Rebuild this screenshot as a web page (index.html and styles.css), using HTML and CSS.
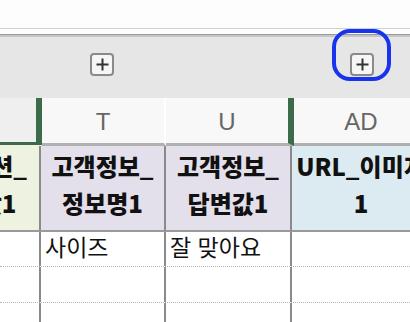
FILE: index.html
```html
<!DOCTYPE html>
<html lang="ko">
<head>
    <meta charset="UTF-8">
    <meta name="viewport" content="width=device-width, initial-scale=1.0">
    <title>Sheet</title>
    <link rel="stylesheet" href="styles.css">
</head>
<body>
    <div class="sheet">
        <div class="toolbar"></div>
        <div class="toolbar-gap"></div>

        <div class="band">
            <div class="band-cell b0"></div>
            <div class="band-cell bt">
                <button class="expand-btn" aria-label="expand">
                    <svg width="13" height="13" viewBox="0 0 13 13"><path d="M6.5 0.5v12M0.5 6.5h12" stroke="#333" stroke-width="2" fill="none"/></svg>
                </button>
            </div>
            <div class="band-cell bu"></div>
            <div class="band-cell bad">
                <button class="expand-btn" aria-label="expand">
                    <svg width="13" height="13" viewBox="0 0 13 13"><path d="M6.5 0.5v12M0.5 6.5h12" stroke="#333" stroke-width="2" fill="none"/></svg>
                </button>
            </div>
        </div>

        <div class="col-head">
            <div class="head-cell h0"></div>
            <div class="head-cell ht">T</div>
            <div class="head-cell hu">U</div>
            <div class="head-cell had">AD</div>
        </div>

        <div class="row field-row">
            <div class="cell c0 field green">
                <div class="clip-text">상품옵션_<br>옵션값1</div>
            </div>
            <div class="cell ct field purple">고객정보_<br>정보명1</div>
            <div class="cell cu field purple">고객정보_<br>답변값1</div>
            <div class="cell cad field blue">URL_이미지<br>1</div>
        </div>

        <div class="row data-row">
            <div class="cell c0"></div>
            <div class="cell ct">사이즈</div>
            <div class="cell cu">잘 맞아요</div>
            <div class="cell cad"></div>
        </div>
        <div class="row data-row">
            <div class="cell c0"></div>
            <div class="cell ct"></div>
            <div class="cell cu"></div>
            <div class="cell cad"></div>
        </div>
        <div class="row data-row last">
            <div class="cell c0"></div>
            <div class="cell ct"></div>
            <div class="cell cu"></div>
            <div class="cell cad"></div>
        </div>

        <div class="focus-ring"></div>
    </div>
</body>
</html>
```

FILE: styles.css
```css
* {
    box-sizing: border-box;
}

body {
    margin: 0;
    font-family: "Noto Sans CJK KR", "Noto Sans", sans-serif;
    background: #fff;
}

.sheet {
    position: relative;
    width: 410px;
    height: 322px;
    overflow: hidden;
}

.toolbar {
    height: 29px;
    background: #fdfdfd;
    border-bottom: 1px solid #d0d0d0;
}

.toolbar-gap {
    height: 6px;
    background: #fdfdfd;
    border-bottom: 1px solid #9a9a9a;
}

.band {
    display: flex;
    height: 63px;
    background: #e6e6e6;
    border-top: 2px solid #c6c6c6;
}

.band-cell {
    display: flex;
    align-items: center;
    justify-content: center;
    flex-shrink: 0;
    padding-bottom: 6px;
}

.b0 { width: 40px; }
.bt { width: 124px; }
.bu { width: 127px; }
.bad { width: 142px; }

.expand-btn {
    display: flex;
    align-items: center;
    justify-content: center;
    width: 24px;
    height: 23px;
    padding: 0;
    background: #f6f6f6;
    border: 2px solid #8a8a8a;
    border-radius: 4px;
}

.col-head {
    display: flex;
    align-items: flex-start;
    height: 48px;
    background: #eef2e0;
}

.head-cell {
    flex-shrink: 0;
    display: flex;
    align-items: center;
    justify-content: center;
    height: 48px;
    background: #f8f8f8;
    color: #666;
    font-family: "Liberation Sans", Arial, sans-serif;
    font-size: 24px;
    border-bottom: 3px solid #b0b0b0;
    padding-top: 2px;
}

.h0 {
    width: 42px;
    height: 47px;
    background: #efefef;
    border-right: 6px solid #3b6b48;
    border-bottom: 3px solid #3b6b48;
}

.ht {
    width: 124px;
    border-right: 2px solid #fff;
}

.hu {
    width: 128px;
    border-right: 6px solid #3b6b48;
}

.had {
    width: 134px;
}

.row {
    display: flex;
}

.cell {
    flex-shrink: 0;
    border-right: 2px solid #8a8a8a;
    overflow: hidden;
    white-space: nowrap;
}

.c0 { width: 41px; }
.ct { width: 125px; }
.cu { width: 126px; }
.cad { width: 138px; border-right: none; }

.field-row {
    height: 86px;
    border-bottom: 2px solid #999;
}

.field {
    padding-top: 1px;
    font-weight: 900;
    font-size: 24px;
    line-height: 37px;
    text-align: center;
    color: #111;
}

.green { background: #eef2e0; }
.purple { background: #e3dfeb; }
.blue { background: #dcebf1; }

.c0.field {
    display: flex;
    justify-content: flex-end;
}

.clip-text {
    flex-shrink: 0;
    width: 130px;
    margin-right: -2px;
}

.data-row {
    height: 35px;
    border-bottom: 1px dotted #b4b4b4;
}

.data-row + .data-row {
    height: 36px;
}

.data-row.last {
    height: 40px;
    border-bottom: none;
}

.data-row .cell {
    padding-left: 4px;
    font-size: 23px;
    line-height: 28px;
    color: #111;
}

.focus-ring {
    position: absolute;
    left: 332px;
    top: 29px;
    width: 59px;
    height: 52px;
    border: 4px solid #1733ee;
    border-radius: 18px;
}
```
